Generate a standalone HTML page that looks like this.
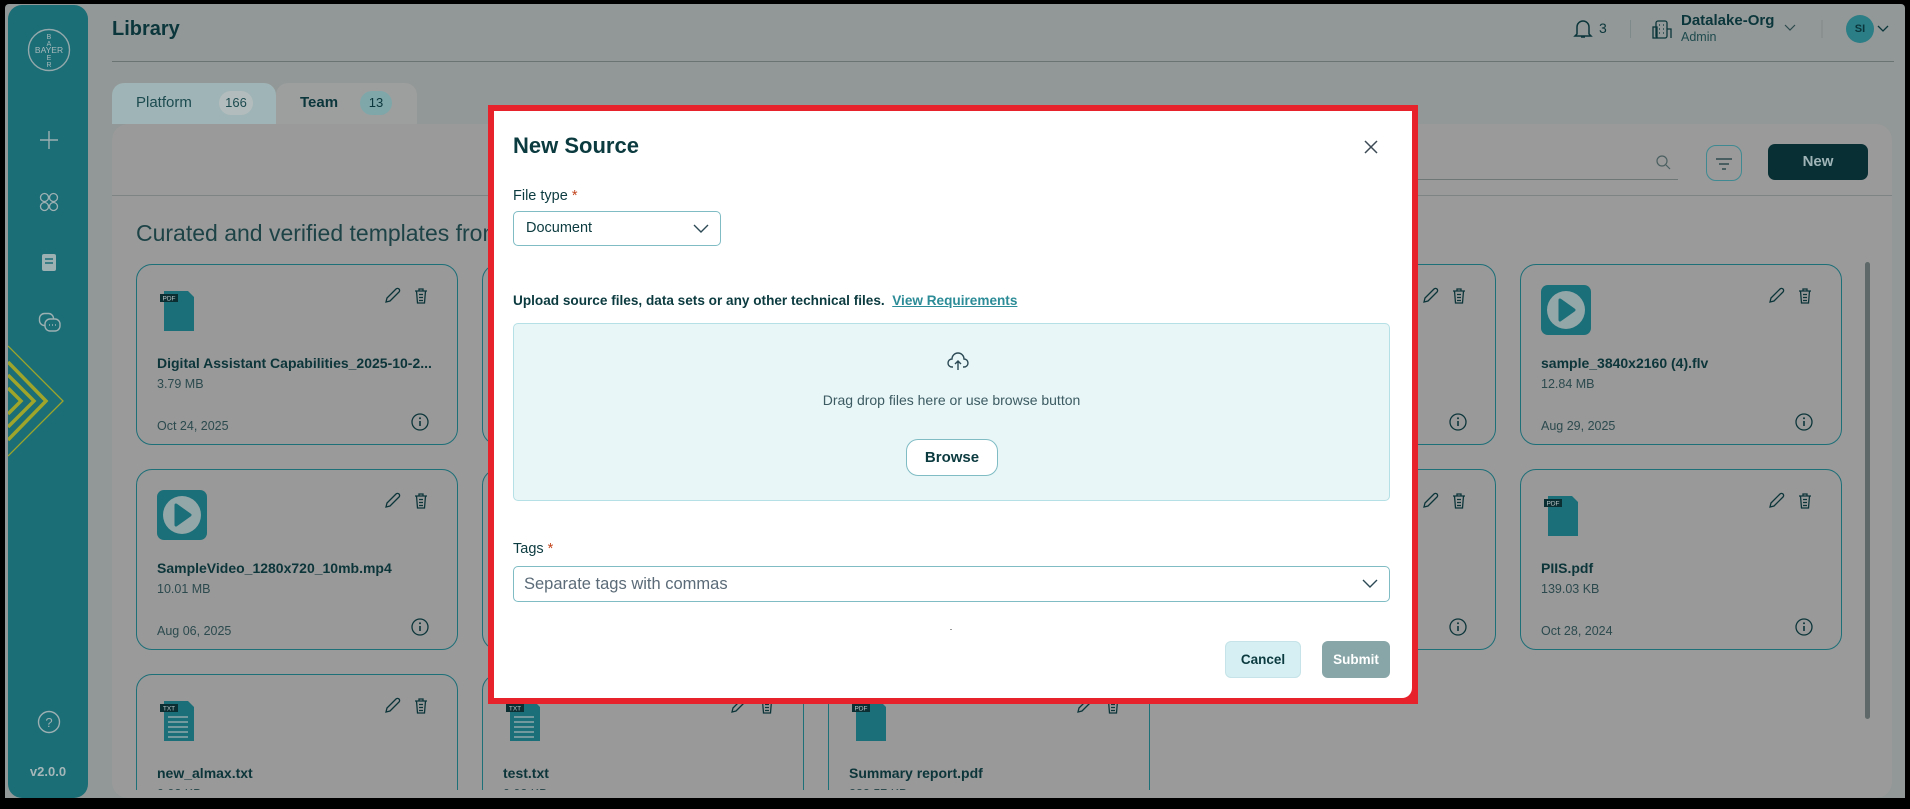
<!DOCTYPE html>
<html><head><meta charset="utf-8"><style>
*{box-sizing:border-box;margin:0;padding:0}
html,body{width:1910px;height:809px;overflow:hidden}
body{background:#000;font-family:"Liberation Sans",sans-serif;position:relative;color:#0b3a3f}
.a{position:absolute}
#page{left:5px;top:4px;width:1900px;height:800px;background:#929897;border-radius:4px}
.side{left:8px;top:5px;width:80px;height:793px;background:#1b6d76;border-radius:14px;overflow:hidden}
.panel{left:112px;top:124px;width:1780px;height:674px;background:#9a9a9a;border-radius:16px;overflow:hidden}
.card{position:absolute;width:322px;height:181px;border:1.5px solid #1d6f78;border-radius:16px;background:#999}
.card .t{position:absolute;left:20px;top:90px;font-size:14px;font-weight:bold;color:#0c353a;white-space:nowrap}
.card .s{position:absolute;left:20px;top:112px;font-size:12.5px;color:#2c4a4e}
.card .d{position:absolute;left:20px;top:154px;font-size:12.5px;color:#2c4a4e}
.card svg{position:absolute}
.modal{left:488px;top:105px;width:930px;height:599px;background:#e8222a}
.mi{left:6px;top:6px;width:918px;height:587px;background:#fff;border-radius:0 0 10px 0}
.lbl{font-size:14.5px;color:#0c3b40}
.req{color:#c2451e}
</style></head><body>
<div id="page" class="a"></div>
<div class="a side">
 <svg class="a" style="left:19px;top:23px" width="44" height="44" viewBox="0 0 44 44"><circle cx="22" cy="22" r="20.5" fill="none" stroke="#93a9ab" stroke-width="1.4"/><text x="22" y="25" font-size="8.5" fill="#a9babc" text-anchor="middle" font-family="Liberation Sans">BAYER</text><text x="22" y="11" font-size="7" fill="#a9babc" text-anchor="middle">B</text><text x="22" y="18" font-size="7" fill="#a9babc" text-anchor="middle">A</text><text x="22" y="32" font-size="7" fill="#a9babc" text-anchor="middle">E</text><text x="22" y="39" font-size="7" fill="#a9babc" text-anchor="middle">R</text></svg>
 <svg class="a" style="left:31px;top:125px" width="20" height="20"><path d="M10 1v18M1 10h18" stroke="#9db0b2" stroke-width="1.4"/></svg>
 <svg class="a" style="left:31px;top:187px" width="20" height="20"><g fill="none" stroke="#9db0b2" stroke-width="1.3"><circle cx="5.5" cy="5.5" r="4"/><circle cx="14.5" cy="5.5" r="4"/><circle cx="5.5" cy="14.5" r="4"/><circle cx="14.5" cy="14.5" r="4"/></g></svg>
 <svg class="a" style="left:33px;top:248px" width="16" height="22"><rect x="1" y="1" width="14" height="17" rx="2" fill="#9db0b2"/><path d="M4 6h8M4 10h8M1 19h14" stroke="#1b6d76" stroke-width="1.6"/></svg>
 <svg class="a" style="left:30px;top:307px" width="24" height="24"><g fill="none" stroke="#9db0b2" stroke-width="1.4"><rect x="1.5" y="1.5" width="14" height="12" rx="5"/><rect x="7" y="7" width="15" height="12" rx="5" fill="#1b6d76"/></g><path d="M11 13h1M14 13h1M17 13h1" stroke="#9db0b2" stroke-width="1.4"/></svg>
 <svg class="a" style="left:0;top:335px" width="80" height="125" viewBox="0 0 80 125"><g fill="none" stroke="#9ea52a"><path d="M0 6 L55 61 L0 116" stroke-width="1.3"/><path d="M0 22 L38 61 L0 100" stroke-width="3.5"/><path d="M0 35 L26 61 L0 87" stroke-width="3.5"/><path d="M0 48 L13 61 L0 74" stroke-width="3.5"/></g></svg>
 <svg class="a" style="left:29px;top:705px" width="24" height="24"><circle cx="12" cy="12" r="10.5" fill="none" stroke="#9db0b2" stroke-width="1.4"/><text x="12" y="17" font-size="13" fill="#9db0b2" text-anchor="middle">?</text></svg>
 <div class="a" style="left:0;width:80px;top:759px;text-align:center;font-size:13px;font-weight:bold;color:#a5b7b9">v2.0.0</div>
</div>
<div class="a" style="left:112px;top:18px;font-size:20px;font-weight:bold;color:#0b363b">Library</div>
<div class="a" style="left:112px;top:61px;width:1782px;height:1px;background:#6a7473"></div>
<svg class="a" style="left:1572px;top:17px" width="22" height="24"><path d="M5 17V10a6 6 0 0 1 12 0v7l2 2H3z M9 20h4" fill="none" stroke="#0b363b" stroke-width="1.5"/></svg>
<div class="a" style="left:1599px;top:20px;font-size:14px;color:#0b363b">3</div>
<div class="a" style="left:1630px;top:20px;width:1px;height:18px;background:#7d8a89"></div>
<svg class="a" style="left:1652px;top:19px" width="22" height="22"><g fill="none" stroke="#0b363b" stroke-width="1.3"><rect x="4" y="2" width="11" height="17" rx="2"/><rect x="1" y="8" width="4" height="11"/><path d="M15 10h4v9M7 6h1M11 6h1M7 10h1M11 10h1M7 14h1M11 14h1"/></g></svg>
<div class="a" style="left:1681px;top:12px;font-size:15px;font-weight:bold;color:#0b363b">Datalake-Org</div>
<div class="a" style="left:1681px;top:30px;font-size:12.5px;color:#1e4a4e">Admin</div>
<svg class="a" style="left:1784px;top:24px" width="12" height="8"><path d="M1 1l5 5 5-5" fill="none" stroke="#2c4a4e" stroke-width="1.2"/></svg>
<div class="a" style="left:1821px;top:20px;width:2px;height:18px;background:#8a8f8f"></div>
<div class="a" style="left:1846px;top:15px;width:28px;height:28px;border-radius:50%;background:#2b7d86;font-size:11px;font-weight:bold;color:#0b363b;text-align:center;line-height:28px">SI</div>
<svg class="a" style="left:1877px;top:25px" width="12" height="8"><path d="M1 1l5 5 5-5" fill="none" stroke="#0b363b" stroke-width="1.3"/></svg>
<div class="a" style="left:112px;top:83px;width:164px;height:41px;background:#9fb4b6;border-radius:12px 12px 0 0"></div>
<div class="a" style="left:276px;top:83px;width:141px;height:41px;background:#9d9f9f;border-radius:12px 12px 0 0"></div>
<div class="a" style="left:136px;top:94px;font-size:15px;color:#1c4b50">Platform</div>
<div class="a" style="left:219px;top:91px;width:34px;height:24px;border-radius:12px;background:#b3bcbc;font-size:13px;color:#1c4b50;text-align:center;line-height:24px">166</div>
<div class="a" style="left:300px;top:94px;font-size:15px;font-weight:bold;color:#0b363b">Team</div>
<div class="a" style="left:360px;top:91px;width:32px;height:24px;border-radius:12px;background:#7fa7aa;font-size:13px;color:#0b363b;text-align:center;line-height:24px">13</div>
<div class="a panel">
 <div class="a" style="left:0;top:71px;width:1780px;height:1px;background:#7e8483"></div>
 <div class="a" style="left:1080px;top:55px;width:486px;height:1px;background:#6f7776"></div>
 <svg class="a" style="left:1543px;top:30px" width="16" height="16"><circle cx="7" cy="7" r="5" fill="none" stroke="#4b5f61" stroke-width="1.2"/><path d="M11 11l4 4" stroke="#4b5f61" stroke-width="1.2"/></svg>
 <div class="a" style="left:1594px;top:21px;width:36px;height:36px;border:1.5px solid #3f8a92;border-radius:10px"></div>
 <svg class="a" style="left:1600px;top:27px" width="24" height="24"><path d="M4 8h16M7 13h10M10 18h4" stroke="#2c4a4e" stroke-width="1.6"/></svg>
 <div class="a" style="left:1656px;top:20px;width:100px;height:36px;background:#072f34;border-radius:7px;color:#9fb4b6;font-size:15px;font-weight:bold;text-align:center;line-height:36px">New</div>
 <div class="a" style="left:24px;top:96px;font-size:23px;color:#1e4347;white-space:nowrap">Curated and verified templates from</div>
 <div class="a" style="left:1753px;top:138px;width:5px;height:457px;background:#5f6868;border-radius:3px"></div>
</div>
<svg width="0" height="0" style="position:absolute;left:0;top:0"><defs>
<g id="pdf"><path d="M0 4h24l6 6v34H0z" fill="#1b6f78"/><rect x="-4" y="7" width="18" height="8" fill="#0b2e33"/><text x="5" y="13.5" font-size="6.5" fill="#b9c6c7" text-anchor="middle">PDF</text></g>
<g id="txt"><path d="M0 4h24l6 6v34H0z" fill="#1b6f78"/><rect x="-4" y="7" width="18" height="8" fill="#0b2e33"/><text x="5" y="13.5" font-size="6.5" fill="#b9c6c7" text-anchor="middle">TXT</text><path d="M4 20h20M4 25h20M4 30h20M4 35h20M4 40h20" stroke="#8fa7a9" stroke-width="1.6"/></g>
<g id="vid"><rect x="0" y="0" width="50" height="50" rx="7" fill="#1b6f78"/><circle cx="25" cy="25" r="19" fill="#93a6a8"/><path d="M19 15l14 10-14 10z" fill="#1b6f78" stroke="#1b6f78" stroke-linejoin="round" stroke-width="3"/></g>
<g id="ed"><g fill="none" stroke="#0c353a" stroke-width="1.3"><path d="M2 15l1-4 9-9a2 2 0 0 1 3 3l-9 9z"/></g><g transform="translate(30,0)" fill="none" stroke="#0c353a" stroke-width="1.3"><path d="M1 4h12M5 4V2h4v2M2.5 4l1 12h7l1-12M5 7.5h4M5 10.5h4M5 13.5h4"/></g></g>
<g id="inf"><circle cx="9" cy="9" r="8" fill="none" stroke="#0c353a" stroke-width="1.3"/><path d="M9 8v5" stroke="#0c353a" stroke-width="1.6"/><circle cx="9" cy="5.3" r="1" fill="#0c353a"/></g>
</defs></svg>

<div class="card" style="left:136px;top:264px"><svg style="left:22px;top:22px" width="40" height="50" viewBox="-5 0 40 50"><use href="#pdf"/></svg><svg style="left:247px;top:22px" width="48" height="20"><use href="#ed"/></svg><div class="t">Digital Assistant Capabilities_2025-10-2...</div><div class="s">3.79 MB</div><div class="d">Oct 24, 2025</div><svg style="left:274px;top:148px" width="20" height="20"><use href="#inf"/></svg></div>
<div class="card" style="left:482px;top:264px"></div>
<div class="card" style="left:1174px;top:264px"><svg style="left:247px;top:22px" width="48" height="20"><use href="#ed"/></svg><svg style="left:274px;top:148px" width="20" height="20"><use href="#inf"/></svg></div>
<div class="card" style="left:1520px;top:264px"><svg style="left:20px;top:20px" width="50" height="50"><use href="#vid"/></svg><svg style="left:247px;top:22px" width="48" height="20"><use href="#ed"/></svg><div class="t">sample_3840x2160 (4).flv</div><div class="s">12.84 MB</div><div class="d">Aug 29, 2025</div><svg style="left:274px;top:148px" width="20" height="20"><use href="#inf"/></svg></div>

<div class="card" style="left:136px;top:469px"><svg style="left:20px;top:20px" width="50" height="50"><use href="#vid"/></svg><svg style="left:247px;top:22px" width="48" height="20"><use href="#ed"/></svg><div class="t">SampleVideo_1280x720_10mb.mp4</div><div class="s">10.01 MB</div><div class="d">Aug 06, 2025</div><svg style="left:274px;top:148px" width="20" height="20"><use href="#inf"/></svg></div>
<div class="card" style="left:482px;top:469px"></div>
<div class="card" style="left:1174px;top:469px"><svg style="left:247px;top:22px" width="48" height="20"><use href="#ed"/></svg><svg style="left:274px;top:148px" width="20" height="20"><use href="#inf"/></svg></div>
<div class="card" style="left:1520px;top:469px"><svg style="left:22px;top:22px" width="40" height="50" viewBox="-5 0 40 50"><use href="#pdf"/></svg><svg style="left:247px;top:22px" width="48" height="20"><use href="#ed"/></svg><div class="t">PIIS.pdf</div><div class="s">139.03 KB</div><div class="d">Oct 28, 2024</div><svg style="left:274px;top:148px" width="20" height="20"><use href="#inf"/></svg></div>

<div class="a" style="left:112px;top:660px;width:1780px;height:130px;overflow:hidden">
<div class="card" style="left:24px;top:14px;height:200px"><svg style="left:22px;top:22px" width="40" height="50" viewBox="-5 0 40 50"><use href="#txt"/></svg><svg style="left:247px;top:22px" width="48" height="20"><use href="#ed"/></svg><div class="t">new_almax.txt</div><div class="s">0.02 KB</div></div>
<div class="card" style="left:370px;top:14px;height:200px"><svg style="left:22px;top:22px" width="40" height="50" viewBox="-5 0 40 50"><use href="#txt"/></svg><svg style="left:247px;top:22px" width="48" height="20"><use href="#ed"/></svg><div class="t">test.txt</div><div class="s">0.02 KB</div></div>
<div class="card" style="left:716px;top:14px;height:200px"><svg style="left:22px;top:22px" width="40" height="50" viewBox="-5 0 40 50"><use href="#pdf"/></svg><svg style="left:247px;top:22px" width="48" height="20"><use href="#ed"/></svg><div class="t">Summary report.pdf</div><div class="s">282.57 KB</div></div>
</div>
<div class="a" style="left:0;top:798px;width:1910px;height:11px;background:#000"></div>

<div class="a modal"><div class="a mi">
 <div class="a" style="left:19px;top:22px;font-size:22px;font-weight:bold;color:#0b3a3f">New Source</div>
 <svg class="a" style="left:869px;top:28px" width="16" height="16"><path d="M2 2l12 12M14 2L2 14" stroke="#3c4a55" stroke-width="1.5"/></svg>
 <div class="a lbl" style="left:19px;top:77px">File type <span class="req">*</span></div>
 <div class="a" style="left:19px;top:100px;width:208px;height:35px;border:1px solid #7fbcc4;border-radius:5px"></div>
 <div class="a" style="left:32px;top:109px;font-size:14.5px;color:#0b3a3f">Document</div>
 <svg class="a" style="left:199px;top:113px" width="16" height="10"><path d="M1 1l7 7 7-7" fill="none" stroke="#2c4a55" stroke-width="1.4"/></svg>
 <div class="a" style="left:19px;top:182px;font-size:13.6px;font-weight:bold;color:#0b3a3f;white-space:nowrap">Upload source files, data sets or any other technical files.&nbsp; <span style="color:#2c8c97;text-decoration:underline">View Requirements</span></div>
 <div class="a" style="left:19px;top:212px;width:877px;height:178px;background:#e8f6f7;border:1px solid #b5e0e5;border-radius:5px"></div>
 <svg class="a" style="left:453px;top:241px" width="22" height="20"><path d="M6 15H5a4 4 0 0 1 0-8 6 6 0 0 1 12 0 4 4 0 0 1 0 8h-1M11 18v-8M8 12l3-3 3 3" fill="none" stroke="#2c4a55" stroke-width="1.4"/></svg>
 <div class="a" style="left:19px;width:877px;text-align:center;top:281px;font-size:14px;color:#3c5b62">Drag drop files here or use browse button</div>
 <div class="a" style="left:412px;top:328px;width:92px;height:37px;border:1px solid #7fbcc4;border-radius:12px;background:#fff;text-align:center;line-height:35px;font-size:15px;font-weight:bold;color:#0b3a3f">Browse</div>
 <div class="a lbl" style="left:19px;top:430px">Tags <span class="req">*</span></div>
 <div class="a" style="left:19px;top:455px;width:877px;height:36px;border:1px solid #7fbcc4;border-radius:5px"></div>
 <div class="a" style="left:30px;top:464px;font-size:16.5px;color:#5b6b78">Separate tags with commas</div>
 <svg class="a" style="left:868px;top:468px" width="16" height="10"><path d="M1 1l7 7 7-7" fill="none" stroke="#2c4a55" stroke-width="1.4"/></svg>
 <div class="a" style="left:456px;top:518px;width:2px;height:1px;background:#999"></div>
 <div class="a" style="left:731px;top:530px;width:76px;height:37px;border:1px solid #c5e3e8;border-radius:6px;background:#d5eff3;text-align:center;line-height:35px;font-size:13.5px;font-weight:bold;color:#0b3a3f">Cancel</div>
 <div class="a" style="left:828px;top:530px;width:68px;height:37px;border-radius:6px;background:#88a6a8;text-align:center;line-height:37px;font-size:13.5px;font-weight:bold;color:#fff">Submit</div>
</div></div>
</body></html>
